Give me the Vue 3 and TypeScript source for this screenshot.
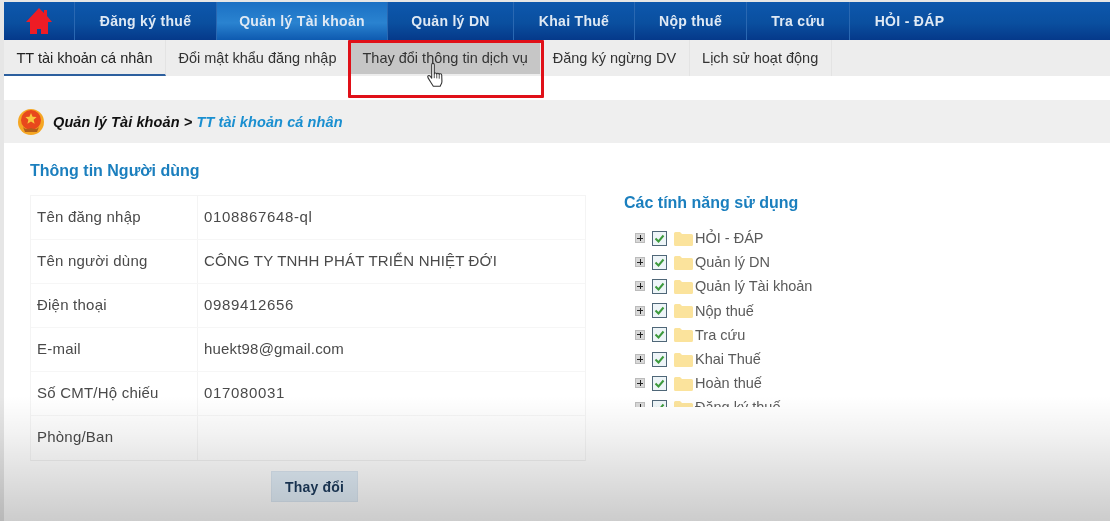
<script setup lang="ts">
const menu: string[] = ['Đăng ký thuế', 'Quản lý Tài khoản', 'Quản lý DN', 'Khai Thuế', 'Nộp thuế', 'Tra cứu', 'HỎI - ĐÁP']
const tabs: string[] = ['TT tài khoản cá nhân', 'Đổi mật khẩu đăng nhập', 'Thay đổi thông tin dịch vụ', 'Đăng ký ngừng DV', 'Lịch sử hoạt động']
const rows: [string, string][] = [
  ['Tên đăng nhập', '0108867648-ql'],
  ['Tên người dùng', 'CÔNG TY TNHH PHÁT TRIỂN NHIỆT ĐỚI'],
  ['Điện thoại', '0989412656'],
  ['E-mail', 'huekt98@gmail.com'],
  ['Số CMT/Hộ chiếu', '017080031'],
  ['Phòng/Ban', ''],
]
const tree: string[] = ['HỎI - ĐÁP', 'Quản lý DN', 'Quản lý Tài khoản', 'Nộp thuế', 'Tra cứu', 'Khai Thuế', 'Hoàn thuế', 'Đăng ký thuế']
const isNumeric = (v: string): boolean => /^\d/.test(v)
</script>

<template>
  <div class="page">
    <div class="inner">
      <nav class="menu">
        <div class="home">
          <svg width="26" height="28" viewBox="0 0 26 28">
            <path d="M13 1 L18 6 V3 H21 V9 L26 15 H22 V27 H15 V22 H11 V27 H4 V15 H0 Z" fill="#ee1c25" />
          </svg>
        </div>
        <div v-for="(m, i) in menu" :key="m" class="menu-item" :class="{ active: i === 1 }">{{ m }}</div>
      </nav>

      <div class="tabs">
        <div v-for="(t, i) in tabs" :key="t" class="tab" :class="{ current: i === 0, hover: i === 2 }">{{ t }}</div>
        <div class="redbox"></div>
        <svg class="cursor" width="20" height="28" viewBox="0 0 18 26">
          <path d="M5 2.5c0-1.6 2.4-1.6 2.4 0V11c0-1 2.2-1.2 2.3.2 0-1 2.2-1.1 2.3.3 .1-.9 2.2-.9 2.3.5 L14.5 18c0 2-1 3-1.6 4.5 H6.5 C5 20 3 17 1.5 14.5 .8 13 2.400 12 3.400 13 L5 15 Z" fill="#fff" stroke="#333" stroke-width="1" stroke-linejoin="round" />
          <path d="M7.400 11v4M9.700 11.200v4M12 11.500v4" stroke="#333" stroke-width=".8" fill="none" />
        </svg>
      </div>

      <div class="spacer"></div>

      <div class="crumb">
        <svg width="26" height="28" viewBox="0 0 26 28">
          <circle cx="13" cy="14" r="13" fill="#f5a623" />
          <circle cx="13" cy="12" r="10" fill="#e8481c" />
          <path d="M13 5l1.600 3.800 4 .3-3 2.600 1 4-3.600-2.200-3.600 2.200 1-4-3-2.600 4-.3z" fill="#f7c83c" />
          <path d="M5 19c3 3 5 2 8 1 3 1 5 2 8-1l-2 5H7z" fill="#b0601a" />
        </svg>
        <span class="crumb-text">Quản lý Tài khoản &gt; <span class="crumb-link">TT tài khoản cá nhân</span></span>
      </div>

      <main class="content">
        <section class="left">
          <h2 class="title">Thông tin Người dùng</h2>
          <div class="table">
            <div v-for="r in rows" :key="r[0]" class="row">
              <div class="label">{{ r[0] }}</div>
              <div class="value" :class="{ numeric: isNumeric(r[1]) }">{{ r[1] }}</div>
            </div>
          </div>
          <div class="actions"><button class="btn" type="button">Thay đổi</button></div>
        </section>

        <section class="right">
          <h2 class="title">Các tính năng sử dụng</h2>
          <ul class="tree">
            <li v-for="n in tree" :key="n" class="node">
              <span class="plus"></span>
              <span class="check">
                <svg width="11" height="11" viewBox="0 0 11 11"><path d="M1.500 5.500 L4.500 8.500 L9.500 2.500" fill="none" stroke="#3d9a3d" stroke-width="2" /></svg>
              </span>
              <svg class="folder" width="19" height="15" viewBox="0 0 19 15">
                <path d="M0 2.500 Q0 1 1.500 1 H6 L8 3 H17.500 Q19 3 19 4.500 V13.500 Q19 15 17.500 15 H1.500 Q0 15 0 13.500 Z" fill="#fbe39c" />
              </svg>
              <span class="node-text">{{ n }}</span>
            </li>
          </ul>
        </section>
      </main>
    </div>
    <div class="shade"></div>
  </div>
</template>

<style>
html, body { margin: 0; background: #fff; overflow: hidden; }
</style>

<style scoped>
.page {
  position: relative;
  width: 1110px;
  height: 521px;
  overflow: hidden;
  background: #e6e6e6;
  padding: 2px 0 0 4px;
  box-sizing: border-box;
  font-family: "Liberation Sans", Arial, sans-serif;
}
.inner { height: 519px; background: #fff; filter: blur(0.45px); }
.menu {
  display: flex;
  height: 38px;
  background: linear-gradient(#0d57ad, #0a4f9f 55%, #05398a);
}
.home { width: 71px; display: flex; justify-content: center; align-items: center; padding-right: 1px; box-sizing: border-box; border-right: 1px solid #2a68b2; }
.menu-item {
  display: flex;
  justify-content: center;
  align-items: center;
  color: #dfe9f4;
  font-size: 14px;
  font-weight: 700;
  letter-spacing: .3px;
  box-sizing: border-box;
  border-right: 1px solid #2a68b2;
  white-space: nowrap;
}
.menu-item:nth-child(2) { width: 142px; }
.menu-item:nth-child(3) { width: 171px; }
.menu-item:nth-child(4) { width: 126px; }
.menu-item:nth-child(5) { width: 121px; }
.menu-item:nth-child(6) { width: 112px; }
.menu-item:nth-child(7) { width: 103px; }
.menu-item:nth-child(8) { width: 119px; border-right: 0; }
.active { background: linear-gradient(#1b70c4, #2a83d0 55%, #0e5ab0); }
.tabs {
  position: relative;
  display: flex;
  height: 36px;
  background: #ededed;
}
.tab {
  padding: 0 12.500px;
  font-size: 14.500px;
  line-height: 36px;
  color: #333;
  white-space: nowrap;
  box-sizing: border-box;
  border-right: 1px solid #e3e3e3;
}
.current { border-bottom: 2px solid #2c5f9e; color: #222; }
.hover { background: #c6c6c6; height: 34px; border: 0; }
.redbox {
  position: absolute;
  left: 344px;
  top: 0;
  width: 196px;
  height: 58px;
  box-sizing: border-box;
  border: 3px solid #e01018;
  border-radius: 1px;
  pointer-events: none;
}
.cursor { position: absolute; left: 422px; top: 22px; }
.spacer { height: 24px; }
.crumb {
  height: 43px;
  background: #efefef;
  display: flex;
  align-items: center;
  gap: 9px;
  padding-left: 14px;
}
.crumb-text { font-size: 14.500px; letter-spacing: .1px; font-weight: 700; font-style: italic; color: #111; }
.crumb-link { color: #1a8fd0; }
.content { display: flex; }
.left { width: 594px; padding-left: 26px; box-sizing: border-box; }
.title {
  margin: 0;
  font-size: 16px;
  line-height: 20px;
  font-weight: 700;
  color: #1b7fbe;
}
.left > .title { margin-top: 18px; margin-bottom: 14px; }
.table { width: 556px; box-sizing: border-box; border: 1px solid #f4f4f4; border-bottom-color: #f0f0f0; }
.row { display: flex; height: 44px; border-bottom: 1px solid #f6f6f6; box-sizing: border-box; color: #4a4a4a; font-size: 15px; line-height: 42px; }
.row:last-child { border-bottom: 0; }
.label { width: 167px; padding-left: 6px; box-sizing: border-box; border-right: 1px solid #f4f4f4; letter-spacing: .22px; }
.value { padding-left: 6px; letter-spacing: .18px; }
.numeric { letter-spacing: .65px; }
.actions { display: flex; padding: 10px 0 0 241px; }
.btn {
  width: 87px;
  height: 31px;
  border: 1px solid #dbe7f2;
  background: #e3eff9;
  color: #1c3a5c;
  font-family: inherit;
  font-size: 14px;
  font-weight: 700;
  letter-spacing: .2px;
  padding: 0;
}
.right { padding: 50px 0 0 26px; }
.tree { list-style: none; margin: 13px 0 0; padding: 0 0 0 11px; height: 181px; overflow: hidden; }
.node { display: flex; align-items: center; height: 24.200px; flex: none; }
.plus {
  position: relative;
  width: 10px;
  height: 10px;
  background: #d8d8d8;
  border: 1px solid #bbb;
  box-sizing: border-box;
  margin-right: 7px;
}
.plus::before, .plus::after { content: ""; position: absolute; background: #222; }
.plus::before { left: 1px; right: 1px; top: 3.500px; height: 1px; }
.plus::after { top: 1px; bottom: 1px; left: 3.500px; width: 1px; }
.check {
  width: 15px;
  height: 15px;
  box-sizing: border-box;
  border: 1.500px solid #4f6778;
  background: #eef5f8;
  display: flex;
  align-items: center;
  justify-content: center;
  margin-right: 7px;
}
.folder { margin-right: 2px; }
.node-text { font-size: 14.500px; color: #5a5a5a; white-space: nowrap; }
.shade {
  position: absolute;
  left: 0;
  right: 0;
  bottom: 0;
  height: 125px;
  background: linear-gradient(rgba(0,0,0,0), rgba(0,0,0,.05) 30%, rgba(0,0,0,.2));
  pointer-events: none;
}
</style>
